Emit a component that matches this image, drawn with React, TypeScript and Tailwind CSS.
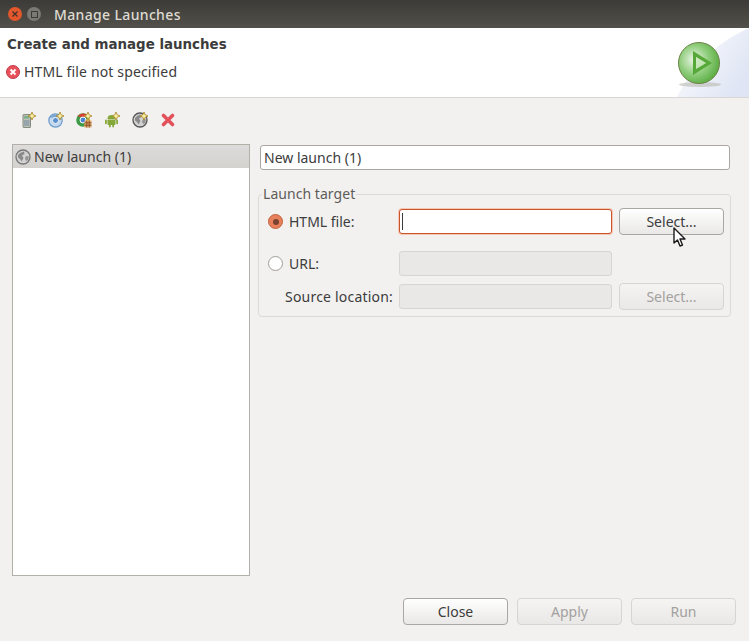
import { Fragment } from 'react'

const sparkle = (
    <path d="M12 0 L13.2 2.8 L16 4 L13.2 5.2 L12 8 L10.8 5.2 L8 4 L10.8 2.8 Z" fill="#fbeFa0" stroke="#a5842a" strokeWidth="0.8" />
)

function GlobeIcon({ badge = false }: { badge?: boolean }) {
    return (
        <svg width="16" height="16" viewBox="0 0 16 16" className="block">
            <circle cx="8" cy="8" r="7" fill="#d2d2d2" stroke={badge ? '#555555' : '#777777'} strokeWidth="1.3" />
            <path d="M3 6 C5 3.5 7 3 9 2.5 L9.5 5 L7 6.5 L8.5 9 L6.5 12.5 L5 10 L3 8.5 Z" fill="#8a8a8a" />
            <path d="M11 7 L14 7.5 L13 11 L11 12 L10 9.5 Z" fill="#949494" />
            {badge && sparkle}
        </svg>
    )
}

function ServerIcon() {
    return (
        <svg width="16" height="16" viewBox="0 0 16 16" className="block">
            <rect x="3" y="2.5" width="7.5" height="13" rx="0.5" fill="#bcc2b8" stroke="#868c80" />
            <rect x="4" y="4" width="5.5" height="2.5" fill="#7fae8a" />
            <rect x="4" y="8" width="5.5" height="6" fill="#98a4ac" />
            {sparkle}
        </svg>
    )
}

function ChromiumIcon() {
    return (
        <svg width="16" height="16" viewBox="0 0 16 16" className="block">
            <circle cx="7.5" cy="8.5" r="6.7" fill="#c3d8ee" stroke="#6e9ccb" strokeWidth="1.2" />
            <path d="M2 6 A6.5 6.5 0 0 1 12 4 L7.5 5 Z" fill="#7aa5d2" />
            <circle cx="7.5" cy="8.5" r="3" fill="#5b91cc" stroke="#eef4fb" />
            {sparkle}
        </svg>
    )
}

function ChromeIcon() {
    return (
        <svg width="16" height="16" viewBox="0 0 16 16" className="block">
            <circle cx="7" cy="8" r="6.8" fill="#3c9a46" />
            <path d="M1.5 4.5 A6.8 6.8 0 0 1 13 5 L7 5 Z" fill="#d9402f" />
            <path d="M13 5 A6.8 6.8 0 0 1 8 14.7 L10 8 Z" fill="#eec23a" />
            <circle cx="7" cy="8" r="3" fill="#4a87d6" stroke="#ffffff" />
            <path d="M8.5 8.5 H15.5 V15.5 H8.5 Z" fill="#dfae78" />
            <path d="M10.8 8.5 V15.5 M13.2 8.5 V15.5 M8.5 10.8 H15.5 M8.5 13.2 H15.5" stroke="#8a4a1c" strokeWidth="0.9" />
            {sparkle}
        </svg>
    )
}

function AndroidIcon() {
    return (
        <svg width="16" height="16" viewBox="0 0 16 16" className="block">
            <path d="M3.5 7 A4 4 0 0 1 11.5 7 Z" fill="#86a83a" />
            <rect x="3.5" y="7.6" width="8" height="5.4" rx="0.7" fill="#86a83a" />
            <rect x="1" y="7.6" width="1.8" height="4.6" rx="0.9" fill="#86a83a" />
            <rect x="12.2" y="7.6" width="1.8" height="4.6" rx="0.9" fill="#86a83a" />
            <rect x="5" y="12.5" width="1.8" height="3" rx="0.9" fill="#86a83a" />
            <rect x="8.2" y="12.5" width="1.8" height="3" rx="0.9" fill="#86a83a" />
            {sparkle}
        </svg>
    )
}

function DeleteIcon() {
    return (
        <svg width="16" height="16" viewBox="0 0 16 16" className="block">
            <path d="M3.5 3.5 L12.5 12.5 M12.5 3.5 L3.5 12.5" stroke="#e2515c" strokeWidth="3.6" strokeLinecap="round" />
        </svg>
    )
}

function Radio({ checked = false }: { checked?: boolean }) {
    if (checked) {
        return (
            <span className="flex h-[15px] w-[15px] shrink-0 items-center justify-center rounded-full border border-[#c0623d] bg-[#e8805c]">
                <span className="h-[6px] w-[6px] rounded-full bg-[#7a4230]" />
            </span>
        )
    }
    return <span className="h-[15px] w-[15px] shrink-0 rounded-full border border-[#a09d98] bg-white" />
}

function Btn({ label, disabled = false }: { label: string; disabled?: boolean }) {
    return (
        <button
            className={
                disabled
                    ? 'h-[27px] w-[105px] rounded-[4px] border border-[#d8d5d1] bg-gradient-to-b from-[#f5f4f3] to-[#e9e8e6] text-[#a3a19e]'
                    : 'h-[27px] w-[105px] rounded-[4px] border border-[#aaa6a1] bg-gradient-to-b from-[#ffffff] to-[#e9e8e6] text-[#3c3c3c]'
            }
        >
            {label}
        </button>
    )
}

export default function App() {
    const tools = [ServerIcon, ChromiumIcon, ChromeIcon, AndroidIcon, () => <GlobeIcon badge />, DeleteIcon]

    return (
        <div className="relative flex h-screen w-full flex-col overflow-hidden bg-[#f2f1f0] font-['Noto_Sans',sans-serif] text-[14px] text-[#3c3c3c]">
            {/* Title bar */}
            <div className="flex h-[28px] shrink-0 items-center bg-gradient-to-b from-[#3c3b37] to-[#51504a] pl-[8px]">
                <span className="flex h-[14px] w-[14px] items-center justify-center rounded-full bg-[#e2572c]">
                    <svg width="8" height="8" viewBox="0 0 8 8">
                        <path d="M1.5 1.5 L6.5 6.5 M6.5 1.5 L1.5 6.5" stroke="#41312a" strokeWidth="1.2" />
                    </svg>
                </span>
                <span className="ml-[5px] flex h-[14px] w-[14px] items-center justify-center rounded-full bg-[#7a7974]">
                    <span className="h-[7px] w-[7px] border border-[#3c3b37]" />
                </span>
                <span className="ml-[13px] text-[14px] font-medium tracking-[0.35px] text-[#dfdbd2]">Manage Launches</span>
            </div>

            {/* Header */}
            <div className="relative h-[70px] shrink-0 overflow-hidden border-b border-[#d9d7d5] bg-white pl-[7px] pt-[8px]">
                <h1 className="font-['DejaVu_Sans',sans-serif] text-[13.4px] font-bold leading-[18px]">Create and manage launches</h1>
                <div className="mt-[9px] flex items-center gap-[4px]">
                    <svg width="14" height="14" viewBox="0 0 14 14" className="-ml-[1px]">
                        <circle cx="7" cy="7" r="6.5" fill="#e8505b" stroke="#c03a45" />
                        <path d="M4.5 4.5 L9.5 9.5 M9.5 4.5 L4.5 9.5" stroke="#ffffff" strokeWidth="1.8" />
                    </svg>
                    <span className="leading-[18px] tracking-[0.15px]">HTML file not specified</span>
                </div>
                <svg width="95" height="69" viewBox="0 0 95 69" className="absolute right-0 top-0">
                    <defs>
                        <linearGradient id="wash" x1="0" y1="0" x2="1" y2="0.6">
                            <stop offset="0" stopColor="#ffffff" />
                            <stop offset="1" stopColor="#dfe5f4" />
                        </linearGradient>
                        <radialGradient id="ball" cx="0.38" cy="0.42" r="0.7">
                            <stop offset="0" stopColor="#eef5ea" />
                            <stop offset="0.5" stopColor="#8fcd7c" />
                            <stop offset="1" stopColor="#4fa636" />
                        </radialGradient>
                    </defs>
                    <path d="M23 69 C35 45 55 18 95 0 V69 Z" fill="url(#wash)" />
                    <ellipse cx="46" cy="56.5" rx="21" ry="2.5" fill="#b9b9b0" opacity="0.6" />
                    <circle cx="45" cy="35" r="20.5" fill="url(#ball)" stroke="#6d8349" strokeWidth="1" />
                    <path d="M39 23 L58 35 L39 47 Z M42 29 V41 L52 35 Z" fill="#56a838" fillRule="evenodd" />
                    <path d="M42 29 V41 L52 35 Z" fill="#c7e7b9" opacity="0.8" />
                </svg>
            </div>

            {/* Toolbar */}
            <div className="flex h-[46px] shrink-0 items-center gap-[12px] pb-[2px] pl-[20px]">
                {tools.map((Icon, i) => (
                    <Fragment key={i}>
                        <Icon />
                    </Fragment>
                ))}
            </div>

            <div className="flex min-h-0 flex-1 px-[12px]">
                {/* Launch list */}
                <div className="h-[432px] w-[238px] shrink-0 border border-[#b3afa9] bg-white">
                    <div className="flex h-[23px] items-center gap-[3px] bg-gradient-to-b from-[#dedcda] to-[#d4d2cf] pl-[2px]">
                        <GlobeIcon />
                        <span>New launch (1)</span>
                    </div>
                </div>

                {/* Details */}
                <div className="ml-[8px] w-[473px] shrink-0">
                    <div className="mx-[2px] mt-[1px] flex h-[25px] w-[470px] items-center rounded-[3px] border border-[#aaa6a1] bg-white pl-[3px]">
                        New launch (1)
                    </div>

                    <div className="relative mt-[24px] rounded-[4px] border border-[#dcdad7] pb-[6px] pl-[9px] pr-[6px] pt-[13px]">
                        <span className="absolute -top-[10px] left-[3px] bg-[#f2f1f0] px-[1px] leading-[18px] tracking-[0.05px] text-[#5e5c58]">Launch target</span>

                        <div className="flex h-[27px] items-center">
                            <div className="flex w-[131px] items-center gap-[6px]">
                                <Radio checked />
                                <span>HTML file:</span>
                            </div>
                            <div className="flex h-[25px] w-[213px] items-center rounded-[3px] border border-[#c9532b] bg-white pl-[2px] shadow-[0_0_0_1px_#f6c8b3]">
                                <span className="h-[17px] w-px bg-[#3c3c3c]" />
                            </div>
                            <div className="ml-[7px]">
                                <Btn label="Select..." />
                            </div>
                        </div>

                        <div className="mt-[16px] flex h-[25px] items-center">
                            <div className="flex w-[131px] items-center gap-[6px]">
                                <Radio />
                                <span className="-mt-[1px]">URL:</span>
                            </div>
                            <div className="h-[25px] w-[213px] rounded-[3px] border border-[#d8d5d1] bg-[#e9e8e6]" />
                        </div>

                        <div className="mt-[7px] flex h-[27px] items-center">
                            <div className="w-[131px] pr-[6px] text-right tracking-[0.2px]">Source location:</div>
                            <div className="h-[25px] w-[213px] rounded-[3px] border border-[#d8d5d1] bg-[#e9e8e6]" />
                            <div className="ml-[7px]">
                                <Btn label="Select..." disabled />
                            </div>
                        </div>
                    </div>
                </div>
            </div>

            {/* Bottom buttons */}
            <div className="flex shrink-0 justify-end gap-[9px] pb-[16px] pr-[13px]">
                <Btn label="Close" />
                <Btn label="Apply" disabled />
                <Btn label="Run" disabled />
            </div>

            {/* Mouse pointer */}
            <svg width="14" height="21" viewBox="0 0 14 21" className="absolute left-[673px] top-[227px]">
                <path d="M1 1 V16 L4.5 13 L7 19 L9.5 18 L7 12 H12 Z" fill="#ffffff" stroke="#1a1a1a" strokeWidth="1.4" strokeLinejoin="round" />
            </svg>
        </div>
    )
}
